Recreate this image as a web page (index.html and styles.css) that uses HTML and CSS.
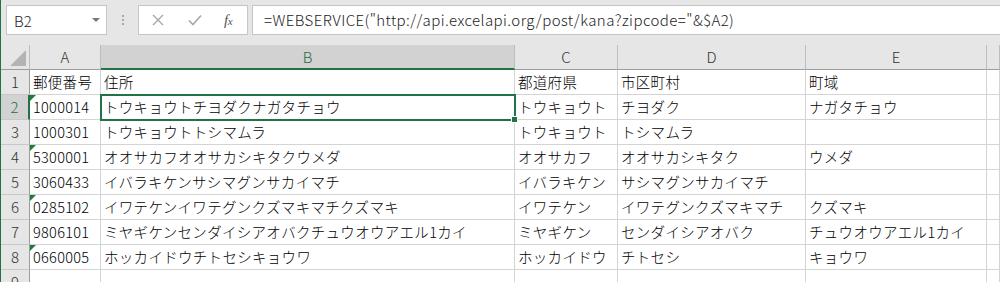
FILE: index.html
```html
<!DOCTYPE html>
<html lang="ja">
<head>
<meta charset="utf-8">
<link rel="stylesheet" href="styles.css">
</head>
<body>
<div class="app">
  <div class="fbar">
    <div class="namebox"><span class="nb-text">B2</span><span class="nb-arrow"></span></div>
    <div class="grip"><i></i><i></i><i></i></div>
    <div class="fxbox">
      <svg class="ic-x" width="12" height="12" viewBox="0 0 12 12"><path d="M1 1 L11 11 M11 1 L1 11" stroke="#a8a8a8" stroke-width="1.4" fill="none"/></svg>
      <svg class="ic-check" width="14" height="12" viewBox="0 0 14 12"><path d="M1 6.5 L5 10.5 L13 1.5" stroke="#a8a8a8" stroke-width="1.6" fill="none"/></svg>
      <span class="ic-fx">f<small>x</small></span>
    </div>
    <div class="finput">=WEBSERVICE("http://api.excelapi.org/post/kana?zipcode="&amp;$A2)</div>
  </div>
  <div class="sheet">
    <div class="corner"><span class="tri"></span></div>
    <div class="ch">A</div>
    <div class="ch active">B</div>
    <div class="ch">C</div>
    <div class="ch">D</div>
    <div class="ch">E</div>
    <div class="ch"></div>

    <div class="rh">1</div>
    <div class="c">郵便番号</div>
    <div class="c">住所</div>
    <div class="c">都道府県</div>
    <div class="c">市区町村</div>
    <div class="c">町域</div>
    <div class="c"></div>

    <div class="rh active">2</div>
    <div class="c warn">1000014</div>
    <div class="c sel">トウキョウトチヨダクナガタチョウ</div>
    <div class="c">トウキョウト</div>
    <div class="c">チヨダク</div>
    <div class="c">ナガタチョウ</div>
    <div class="c"></div>

    <div class="rh">3</div>
    <div class="c">1000301</div>
    <div class="c">トウキョウトトシマムラ</div>
    <div class="c">トウキョウト</div>
    <div class="c">トシマムラ</div>
    <div class="c"></div>
    <div class="c"></div>

    <div class="rh">4</div>
    <div class="c warn">5300001</div>
    <div class="c">オオサカフオオサカシキタクウメダ</div>
    <div class="c">オオサカフ</div>
    <div class="c">オオサカシキタク</div>
    <div class="c">ウメダ</div>
    <div class="c"></div>

    <div class="rh">5</div>
    <div class="c">3060433</div>
    <div class="c">イバラキケンサシマグンサカイマチ</div>
    <div class="c">イバラキケン</div>
    <div class="c">サシマグンサカイマチ</div>
    <div class="c"></div>
    <div class="c"></div>

    <div class="rh">6</div>
    <div class="c warn">0285102</div>
    <div class="c">イワテケンイワテグンクズマキマチクズマキ</div>
    <div class="c">イワテケン</div>
    <div class="c">イワテグンクズマキマチ</div>
    <div class="c">クズマキ</div>
    <div class="c"></div>

    <div class="rh">7</div>
    <div class="c">9806101</div>
    <div class="c">ミヤギケンセンダイシアオバクチュウオウアエル1カイ</div>
    <div class="c">ミヤギケン</div>
    <div class="c">センダイシアオバク</div>
    <div class="c">チュウオウアエル1カイ</div>
    <div class="c"></div>

    <div class="rh">8</div>
    <div class="c warn">0660005</div>
    <div class="c">ホッカイドウチトセシキョウワ</div>
    <div class="c">ホッカイドウ</div>
    <div class="c">チトセシ</div>
    <div class="c">キョウワ</div>
    <div class="c"></div>

    <div class="rh">9</div>
    <div class="c"></div>
    <div class="c"></div>
    <div class="c"></div>
    <div class="c"></div>
    <div class="c"></div>
    <div class="c"></div>
  </div>
</div>
</body>
</html>
```
FILE: styles.css
```css
html, body {
  margin: 0;
  padding: 0;
  background: #ffffff;
}
body {
  width: 1000px;
  height: 282px;
  overflow: hidden;
  font-family: "Noto Sans CJK JP", "Noto Sans", sans-serif;
}
.app {
  border-left: 1px solid #217346;
  height: 282px;
  overflow: hidden;
  background: #ffffff;
}
.fbar {
  background: #e6e6e6;
  height: 45px;
  box-sizing: border-box;
  padding: 5px 0 0 5px;
  display: flex;
  align-items: flex-start;
}
.namebox {
  width: 101px;
  height: 30px;
  box-sizing: border-box;
  background: #fff;
  border: 1px solid #c6c6c6;
  display: flex;
  align-items: center;
  padding-left: 7px;
  position: relative;
}
.nb-text {
  font-size: 15px;
  font-weight: 300;
  color: #222;
  flex: 1;
}
.nb-arrow {
  width: 0;
  height: 0;
  border-left: 4px solid transparent;
  border-right: 4px solid transparent;
  border-top: 4px solid #777;
  margin-right: 6px;
}
.grip {
  width: 31px;
  height: 30px;
  display: flex;
  flex-direction: column;
  align-items: center;
  justify-content: center;
  gap: 2px;
}
.grip i {
  display: block;
  width: 2px;
  height: 2px;
  background: #a8a8a8;
}
.fxbox {
  width: 110px;
  height: 30px;
  box-sizing: border-box;
  background: #fff;
  border: 1px solid #c6c6c6;
  display: flex;
  align-items: center;
  padding-left: 13px;
}
.ic-x { margin-right: 24px; }
.ic-check { margin-right: 22px; }
.ic-fx {
  font-family: "Liberation Serif", serif;
  font-style: italic;
  font-size: 15px;
  color: #555;
  letter-spacing: -0.5px;
}
.ic-fx small { font-size: 11px; }
.finput {
  margin-left: 4px;
  flex: 1;
  height: 30px;
  box-sizing: border-box;
  background: #fff;
  border: 1px solid #c6c6c6;
  border-right: none;
  padding-left: 11px;
  font-size: 15px;
  font-weight: 300;
  letter-spacing: 0.42px;
  line-height: 28px;
  color: #222;
  white-space: nowrap;
}
.sheet {
  display: grid;
  grid-template-columns: 29px 71px 414px 103px 188px 181px 1fr;
  grid-template-rows: 25px repeat(9, 25px);
}
.sheet > div {
  box-sizing: border-box;
  border-right: 1px solid #d4d4d4;
  border-bottom: 1px solid #d4d4d4;
  overflow: hidden;
  white-space: nowrap;
}
.corner, .ch {
  background: #e6e6e6;
}
.sheet > .corner, .sheet > .ch {
  border-bottom: 1px solid #9c9c9c;
  border-right: 1px solid #bdbdbd;
}
.corner {
  position: relative;
}
.tri {
  position: absolute;
  right: 3px;
  bottom: 3px;
  width: 0;
  height: 0;
  border-left: 16px solid transparent;
  border-bottom: 16px solid #b4b4b4;
}
.ch {
  text-align: center;
  font-size: 15px;
  font-weight: 300;
  line-height: 24px;
  color: #333;
}
.sheet > .ch.active {
  background: #d2d2d2;
  border-bottom: 2px solid #217346;
  color: #1f6b40;
}
.rh {
  background: #e6e6e6;
  text-align: center;
  font-size: 15px;
  font-weight: 300;
  line-height: 24px;
  color: #333;
}
.sheet > .rh {
  border-right: 1px solid #9c9c9c;
  border-bottom: 1px solid #c8c8c8;
}
.sheet > .rh.active {
  background: #d2d2d2;
  border-right: 2px solid #217346;
  color: #1f6b40;
}
.c {
  font-size: 14.5px;
  font-weight: 300;
  line-height: 24px;
  padding-left: 3px;
  color: #000;
  letter-spacing: 0.3px;
}
.sheet > .warn {
  position: relative;
}
.warn::before {
  content: "";
  position: absolute;
  left: 0;
  top: 0;
  border-top: 6px solid #1d7d3a;
  border-right: 6px solid transparent;
}
.sheet > .sel {
  position: relative;
  overflow: visible;
  z-index: 2;
  outline: 2px solid #217346;
  outline-offset: -1px;
}
.sel::after {
  content: "";
  position: absolute;
  right: -4px;
  bottom: -4px;
  width: 5px;
  height: 5px;
  background: #217346;
  border: 1px solid #fff;
}
```
